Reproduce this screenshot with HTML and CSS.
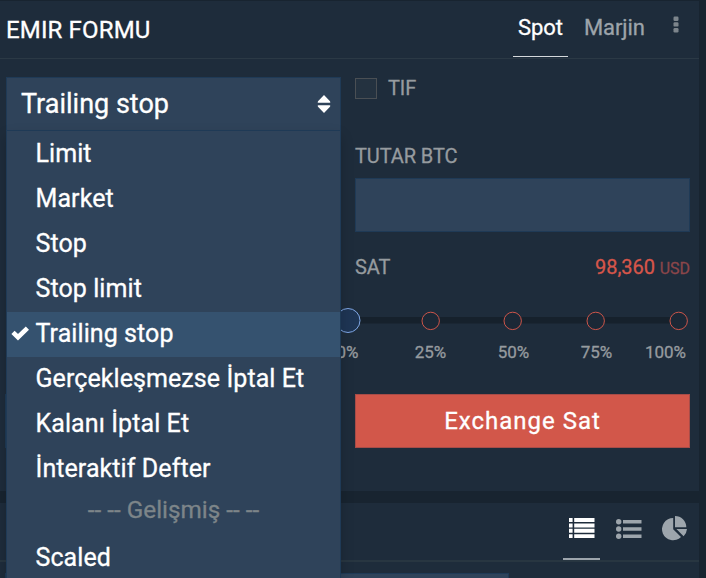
FILE: index.html
```html
<!DOCTYPE html>
<html lang="tr">
<head>
<meta charset="utf-8">
<title>Emir Formu</title>
<link rel="stylesheet" href="styles.css">
</head>
<body>
<section class="panel order">
  <header class="head">
    <h1 class="title">EMIR FORMU</h1>
    <nav class="tabs">
      <a class="tab active"><span class="spot">Spot</span></a>
      <a class="tab margin">Marjin</a>
      <svg class="more" width="6" height="18" viewBox="0 0 6 18"><rect x="0.5" y="0.5" width="5" height="4.4" rx="1.2"/><rect x="0.5" y="6.2" width="5" height="4.4" rx="1.2"/><rect x="0.5" y="12" width="5" height="4.4" rx="1.2"/></svg>
    </nav>
  </header>
  <div class="form">
    <div class="col left">
      <div class="select">
        <span>Trailing stop</span>
        <svg width="14" height="18" viewBox="0 0 14 18"><path d="M7 0 13 6.3Q14 7.8 12.6 7.8H1.4Q0 7.8 1 6.3ZM7 18 13 11.7Q14 10.2 12.6 10.2H1.4Q0 10.2 1 11.7Z"/></svg>
        <ul class="menu">
          <li>Limit</li>
          <li>Market</li>
          <li>Stop</li>
          <li>Stop limit</li>
          <li class="selected"><svg class="check" width="18" height="15" viewBox="0 0 18 15"><path d="M2 6.3 7 11.2 16.4 2.1"/></svg>Trailing stop</li>
          <li>Gerçekleşmezse İptal Et</li>
          <li>Kalanı İptal Et</li>
          <li>İnteraktif Defter</li>
          <li class="group">-- -- Gelişmiş -- --</li>
          <li class="last">Scaled</li>
        </ul>
      </div>
      <div class="buy"></div>
    </div>
    <div class="col right">
      <label class="tif"><span class="box"></span>TIF</label>
      <div class="label">TUTAR BTC</div>
      <div class="input"></div>
      <div class="price"><span>SAT</span><span class="value">98,360 <small>USD</small></span></div>
      <svg class="slider" width="350" height="28" viewBox="0 0 350 28">
        <rect class="rail" x="8" y="11" width="323" height="6.5"/>
        <circle class="knob" cx="8" cy="14.5" r="12"/>
        <circle class="stop" cx="90.7" cy="14.9" r="8.7"/>
        <circle class="stop" cx="172.7" cy="14.9" r="8.7"/>
        <circle class="stop" cx="255.7" cy="14.9" r="8.7"/>
        <circle class="stop" cx="338.7" cy="14.9" r="8.7"/>
      </svg>
      <div class="scale"><span>0%</span><span>25%</span><span>50%</span><span>75%</span><span>100%</span></div>
      <div class="sell">Exchange Sat</div>
    </div>
  </div>
</section>
<section class="panel book">
  <div class="views">
    <span class="view active"><svg width="26" height="20" viewBox="0 0 26 20"><path d="M0 0h3.6v4H0zM5.2 0h20.3v4H5.2zM0 5.5h3.6v4H0zM5.2 5.5h20.3v4H5.2zM0 10.8h3.6v4H0zM5.2 10.8h20.3v4H5.2zM0 16.2h3.6v4H0zM5.2 16.2h20.3v4H5.2z"/></svg></span>
    <span class="view list"><svg width="26" height="20" viewBox="0 0 26 20"><circle cx="2.7" cy="2.7" r="2.7"/><circle cx="2.7" cy="10" r="2.7"/><circle cx="2.7" cy="17.3" r="2.7"/><path d="M7 1h18.5v3.6H7zM7 8.2h18.5v3.6H7zM7 15.4h18.5V19H7z"/></svg></span>
    <span class="view pie"><svg width="26" height="25" viewBox="0 0 26 25"><path d="M11.2 2.1V13.2L19 21A11.1 11.1 0 1 1 11.2 2.1ZM13 0A11.3 11.3 0 0 1 24.3 11.3H13ZM14.4 13.1H25A11 11 0 0 1 21.6 20.3Z"/></svg></span>
  </div>
  <div class="filter"></div>
</section>
</body>
</html>
```

FILE: styles.css
```css
* { box-sizing: border-box; }
body {
  margin: 0;
  height: 578px;
  padding: 1px 7px 0 0;
  overflow: hidden;
  background: #182430;
  color: #fff;
  font-family: Roboto, "Liberation Sans", sans-serif;
  -webkit-text-stroke: .3px currentColor;
}
svg { display: block; fill: currentColor; }
.panel { background: #1e2c3b; }
.order { height: 490px; margin-bottom: 12px; }
.head {
  height: 58px;
  display: flex;
  justify-content: space-between;
  border-bottom: 1px solid #2b3945;
}
.title { margin: 0 0 0 6px; font-size: 24px; font-weight: 400; line-height: 58px; letter-spacing: .15px; }
.tabs { display: flex; padding-right: 20px; font-size: 22px; line-height: 54px; }
.tab.active { width: 55px; height: 56px; text-align: center; border-bottom: 1px solid #d5d9dc; }
.tab.margin { width: 60px; margin-left: 16px; letter-spacing: -.1px; color: #9da4aa; }
.more { margin: 15px 0 0 29px; color: #7d858c; }
.form { display: flex; height: 431px; padding: 18px 9px 0 5px; gap: 14px; }
.col { flex: none; }
.left { width: 336px; }
.right { width: 335px; }
.select {
  position: relative;
  z-index: 2;
  height: 54px;
  margin-left: 1px;
  padding: 0 9.5px 0 14px;
  display: flex;
  align-items: center;
  justify-content: space-between;
  background: #2f435a;
  border: 1px solid #1f3a56;
  font-size: 27px;
}
.menu {
  position: absolute;
  left: -1px;
  top: 52px;
  width: 335px;
  height: 448px;
  margin: 0;
  padding: 1px 0 0;
  overflow: hidden;
  list-style: none;
  background: #2f435a;
  border: 1px solid #1f3a56;
  border-bottom: 0;
  box-shadow: 0 6px 12px rgba(0, 0, 0, .18);
  font-size: 25px;
  letter-spacing: .08px;
}
.menu li { height: 45px; padding-left: 28.5px; line-height: 43px; white-space: nowrap; }
.menu .selected { display: flex; padding-left: 4px; background: #35526f; }
.check { margin: 14px 6.5px 0 0; fill: none; stroke: #fff; stroke-width: 4.6; }
.menu .group { height: 43px; padding: 0; font-size: 24.3px; line-height: 35px; letter-spacing: 0; text-align: center; color: #7d8589; }
.menu .last { line-height: 45px; }
.buy { height: 54px; margin-top: 263px; border: 1px solid #1f3a56; }
.tif { display: flex; align-items: center; height: 22px; gap: 11px; font-size: 20px; letter-spacing: -.1px; color: #969b9f; }
.box { width: 22px; height: 21px; background: #243240; border: 1px solid #4a4f54; }
.label { height: 24px; margin-top: 45px; font-size: 20px; line-height: 24px; letter-spacing: -.1px; color: #969b9f; }
.input { height: 54px; margin-top: 10px; background: #2f435a; border: 1px solid #1f3a56; }
.price { display: flex; justify-content: space-between; margin-top: 23px; font-size: 20px; line-height: 24px; letter-spacing: -.05px; color: #969b9f; }
.value { color: #d6564a; }
.value small { font-size: 16px; color: #8b464a; }
.slider { margin: 25px 0 0 -15px; }
.rail { fill: #16212c; }
.knob { fill: #1e3554; stroke: #80a8e6; }
.stop { fill: #1b2836; stroke: #cc554a; }
.scale {
  display: grid;
  grid-template-columns: 83px 83px 83px 83px 55px;
  margin: 8px 0 0 -49px;
  font-size: 17px;
  line-height: 20px;
  text-align: center;
  color: #969b9f;
}
.sell {
  height: 54px;
  margin-top: 32px;
  background: #d2574a;
  border: 1px solid #a74c48;
  font-size: 24px;
  line-height: 52px;
  letter-spacing: 1px;
  text-align: center;
}
.book { height: 75px; overflow: hidden; }
.views { display: flex; justify-content: flex-end; height: 59px; padding-right: 5px; gap: 10px; border-bottom: 2px solid #283641; }
.view { width: 37px; height: 57px; padding: 15px 0 0 6px; color: #9da5ac; }
.view.list { padding-top: 16px; }
.view.pie { padding: 13px 0 0 5px; }
.view.active { color: #fff; border-bottom: 2px solid #9da5ac; }
.filter { width: 504px; height: 5px; margin: 11px 0 0 5px; background: #2f435a; border: 1px solid #1f3a56; border-bottom: 0; }
```
